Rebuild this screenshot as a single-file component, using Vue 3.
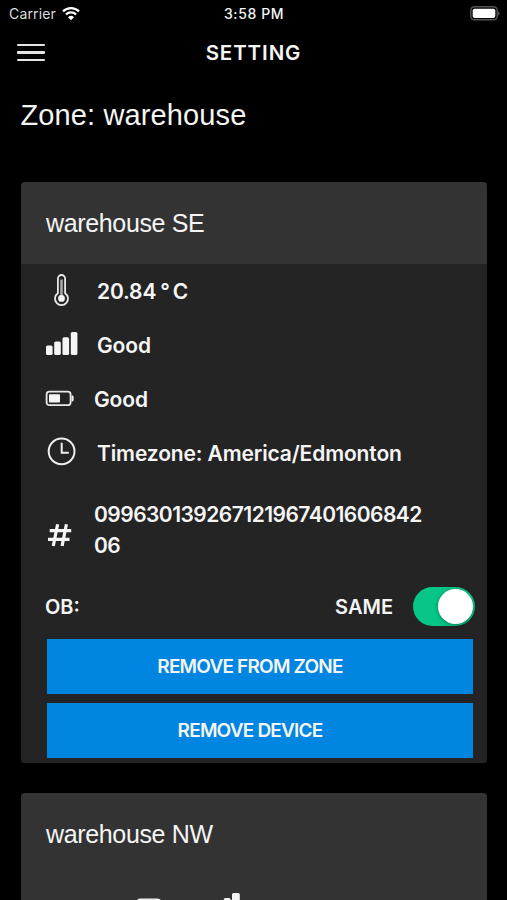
<template>
  <div class="screen">
    <!-- Status bar -->
    <div class="status-bar">
      <div class="carrier">
        <span class="carrier-name">Carrier</span>
        <svg class="wifi" viewBox="0 0 18 14">
          <path d="M1 4.4 A11.5 11.5 0 0 1 17 4.4" />
          <path d="M3.9 7.5 A7.3 7.3 0 0 1 14.1 7.5" />
          <path class="dot" d="M9 13.2 L6 10.2 A4.3 4.3 0 0 1 12 10.2 Z" />
        </svg>
      </div>
      <span class="time">3:58 PM</span>
      <svg class="phone-battery" viewBox="0 0 31 15">
        <rect class="outline" x="0.8" y="0.8" width="26.4" height="13" rx="3.6" />
        <rect class="charge" x="2.7" y="2.7" width="22.6" height="9.2" rx="1.8" />
        <path class="tip" d="M28.2 4.9 Q31 7.3 28.2 9.7 Z" />
      </svg>
    </div>

    <!-- Navigation -->
    <header class="nav-bar">
      <button class="menu-button" aria-label="Menu">
        <span></span>
        <span></span>
        <span></span>
      </button>
      <h1 class="nav-title">SETTING</h1>
    </header>

    <h2 class="zone-title">Zone: {{ zone }}</h2>

    <section class="device-card">
      <div class="card-header">{{ device.name }}</div>
      <div class="card-body">
        <div class="info-row">
          <svg class="icon" viewBox="0 0 34 34">
            <path class="thin" d="M12.9 19.2 V4.6 A3.6 3.6 0 0 1 20.1 4.6 V19.2 A6.5 6.5 0 1 1 12.9 19.2 Z" />
            <path class="mercury" d="M16.5 5.5 V24" />
            <circle class="solid" cx="16.5" cy="24.4" r="3.4" />
          </svg>
          <span class="value">{{ device.temperature }}<span class="degree">°</span>C</span>
        </div>
        <div class="info-row">
          <svg class="icon" viewBox="0 0 34 34">
            <rect class="solid" x="1" y="17.5" width="6.6" height="9.6" rx="1.6" />
            <rect class="solid" x="9.2" y="13.4" width="6.6" height="13.7" rx="1.6" />
            <rect class="solid" x="17.5" y="9.3" width="6.6" height="17.8" rx="1.6" />
            <rect class="solid" x="25.8" y="4" width="6.6" height="23.1" rx="1.6" />
          </svg>
          <span class="value">{{ device.signal }}</span>
        </div>
        <div class="info-row narrow">
          <svg class="icon" viewBox="0 0 34 34">
            <rect class="thin" x="1.6" y="9.6" width="24" height="13.6" rx="2.8" />
            <rect class="solid" x="4" y="12.2" width="11" height="8.4" rx="0.8" />
            <path class="solid" d="M26.6 13.5 H27.2 A1.4 1.4 0 0 1 28.6 14.9 V18 A1.4 1.4 0 0 1 27.2 19.4 H26.6 Z" />
          </svg>
          <span class="value">{{ device.battery }}</span>
        </div>
        <div class="info-row">
          <svg class="icon" viewBox="0 0 34 34">
            <circle class="line" cx="16.6" cy="15.3" r="12.9" />
            <path class="line" d="M16.7 6.8 V16.8 H23.8" />
          </svg>
          <span class="value">Timezone: {{ device.timezone }}</span>
        </div>
        <div class="info-row narrow id-row">
          <svg class="icon" viewBox="0 0 34 34">
            <path class="hash" d="M12.6 6.2 L8.3 28 M21.4 6.2 L17.1 28 M4.7 12.7 H26.2 M3 21.3 H24.5" />
          </svg>
          <span class="value device-id">{{ device.id }}</span>
        </div>

        <div class="ob-row">
          <span class="ob-label">OB:</span>
          <span class="ob-value">{{ same ? 'SAME' : 'DIFF' }}</span>
          <button class="toggle" :class="{ on: same }" aria-label="Same" @click="same = !same">
            <span class="knob"></span>
          </button>
        </div>

        <button class="action">REMOVE FROM ZONE</button>
        <button class="action">REMOVE DEVICE</button>
      </div>
    </section>

    <section class="device-card">
      <div class="card-header">warehouse NW</div>
      <div class="summary">
        <svg class="summary-battery" viewBox="0 0 30 18">
          <rect x="1.3" y="1.3" width="23" height="14" rx="2.8" />
        </svg>
        <svg class="summary-signal" viewBox="0 0 34 24">
          <rect x="1" y="14" width="6.6" height="10" rx="1.6" />
          <rect x="9.2" y="9.6" width="6.6" height="14" rx="1.6" />
          <rect x="16.8" y="5" width="6.8" height="19" rx="1.6" />
          <rect x="25" y="0" width="7.8" height="24" rx="1.6" />
        </svg>
      </div>
    </section>
  </div>
</template>

<script setup>
import { ref } from 'vue'

const zone = 'warehouse'
const same = ref(true)

const device = {
  name: 'warehouse SE',
  temperature: '20.84',
  signal: 'Good',
  battery: 'Good',
  timezone: 'America/Edmonton',
  id: '09963013926712196740160684206'
}
</script>

<style>
body {
  background: #000;
}
</style>

<style scoped>
.screen {
  box-sizing: border-box;
  height: 900px;
  overflow: hidden;
  padding: 0 20px 0 20.5px;
  background: #000;
  color: #f5f5f5;
  font-family: Inter, "Liberation Sans", sans-serif;
}

button {
  border: none;
  padding: 0;
  font-family: inherit;
  color: inherit;
  cursor: pointer;
}

.status-bar {
  display: grid;
  grid-template-columns: 1fr auto 1fr;
  align-items: center;
  height: 27px;
  margin: 0 -12px 0 -11.5px;
}

.carrier {
  display: flex;
  align-items: center;
  gap: 6px;
}

.carrier-name {
  font-size: 14px;
  letter-spacing: 0.15px;
  color: #ddd;
}

.wifi {
  width: 18px;
  height: 14px;
  fill: none;
  stroke: #fff;
  stroke-width: 2.3;
}

.wifi .dot {
  fill: #fff;
  stroke: none;
}

.time {
  font-size: 14px;
  font-weight: 500;
  letter-spacing: 0.6px;
}

.phone-battery {
  justify-self: end;
  width: 31px;
  height: 15px;
  margin-right: -2px;
}

.phone-battery .outline {
  fill: none;
  stroke: #555;
  stroke-width: 1.4;
}

.phone-battery .charge {
  fill: #fff;
}

.phone-battery .tip {
  fill: #666;
}

.nav-bar {
  display: grid;
  grid-template-columns: 60px 1fr 60px;
  align-items: center;
  height: 51px;
  margin: 0 -3px 1px -3.5px;
}

.menu-button {
  display: flex;
  flex-direction: column;
  gap: 5px;
  width: 28px;
  background: none;
}

.menu-button span {
  height: 2.4px;
  border-radius: 1px;
  background: #e4e4e4;
}

.nav-title {
  margin: 0;
  text-align: center;
  font-size: 20.5px;
  font-weight: 600;
  line-height: 24px;
  letter-spacing: 0.9px;
}

.zone-title {
  height: 103px;
  margin: 0;
  padding-top: 20px;
  box-sizing: border-box;
  font-family: "Liberation Sans", sans-serif;
  font-size: 29px;
  font-weight: 400;
  line-height: 33px;
  letter-spacing: 0.12px;
}

.device-card {
  width: 466.5px;
  margin-bottom: 30px;
  border-radius: 4px;
  overflow: hidden;
  background: #333;
}

.card-header {
  height: 82px;
  padding: 0 25.5px;
  font-family: "Liberation Sans", sans-serif;
  font-size: 25px;
  line-height: 83px;
  letter-spacing: -0.35px;
}

.card-body {
  box-sizing: border-box;
  height: 499px;
  padding: 0 15px 0 24.5px;
  background: #242424;
}

.info-row {
  display: flex;
  align-items: center;
  gap: 18px;
  height: 54px;
}

.info-row.narrow {
  gap: 15px;
}

.id-row {
  height: 99px;
}

.icon {
  flex: none;
  width: 34px;
  height: 34px;
}

.id-row .icon {
  align-self: flex-end;
  margin-bottom: 27px;
}

.icon .solid {
  fill: #f5f5f5;
}

.icon .thin {
  fill: none;
  stroke: #e8e8e8;
  stroke-width: 1.8;
}

.icon .mercury {
  stroke: #a8a8a8;
  stroke-width: 2.6;
}

.icon .line {
  fill: none;
  stroke: #eee;
  stroke-width: 2;
}

.icon .hash {
  fill: none;
  stroke: #f5f5f5;
  stroke-width: 3.2;
}

.value {
  font-size: 21px;
  font-weight: 600;
  letter-spacing: -0.13px;
}

.degree {
  margin: 0 3px 0 4px;
}

.device-id {
  width: 335px;
  line-height: 31px;
  letter-spacing: -0.53px;
  word-break: break-all;
}

.ob-row {
  display: flex;
  align-items: center;
  height: 55px;
  margin-right: -3px;
  margin-bottom: 5px;
}

.ob-label,
.ob-value {
  font-size: 20px;
  font-weight: 600;
}

.ob-value {
  margin-left: auto;
  margin-right: 20px;
}

.toggle {
  display: flex;
  align-items: center;
  box-sizing: border-box;
  width: 62px;
  height: 39px;
  padding: 0 2px;
  border-radius: 20px;
  background: #555;
}

.toggle.on {
  justify-content: flex-end;
  background: #08c588;
}

.knob {
  width: 35px;
  height: 35px;
  border-radius: 50%;
  background: #fff;
  box-shadow: 0 1px 4px rgba(0, 0, 0, 0.35);
}

.action {
  display: block;
  width: 426px;
  height: 55px;
  margin: 0 0 9px 2px;
  padding-right: 20px;
  background: #0085e1;
  font-size: 19px;
  font-weight: 600;
  letter-spacing: -0.8px;
}

.summary {
  display: flex;
  align-items: flex-start;
  height: 60px;
  padding: 18px 0 0 115.5px;
}

.summary-battery {
  width: 30px;
  height: 18px;
  margin-top: 5px;
  fill: none;
  stroke: #eee;
  stroke-width: 1.8;
}

.summary-signal {
  width: 34px;
  height: 24px;
  margin-left: 41px;
  fill: #f5f5f5;
}
</style>
